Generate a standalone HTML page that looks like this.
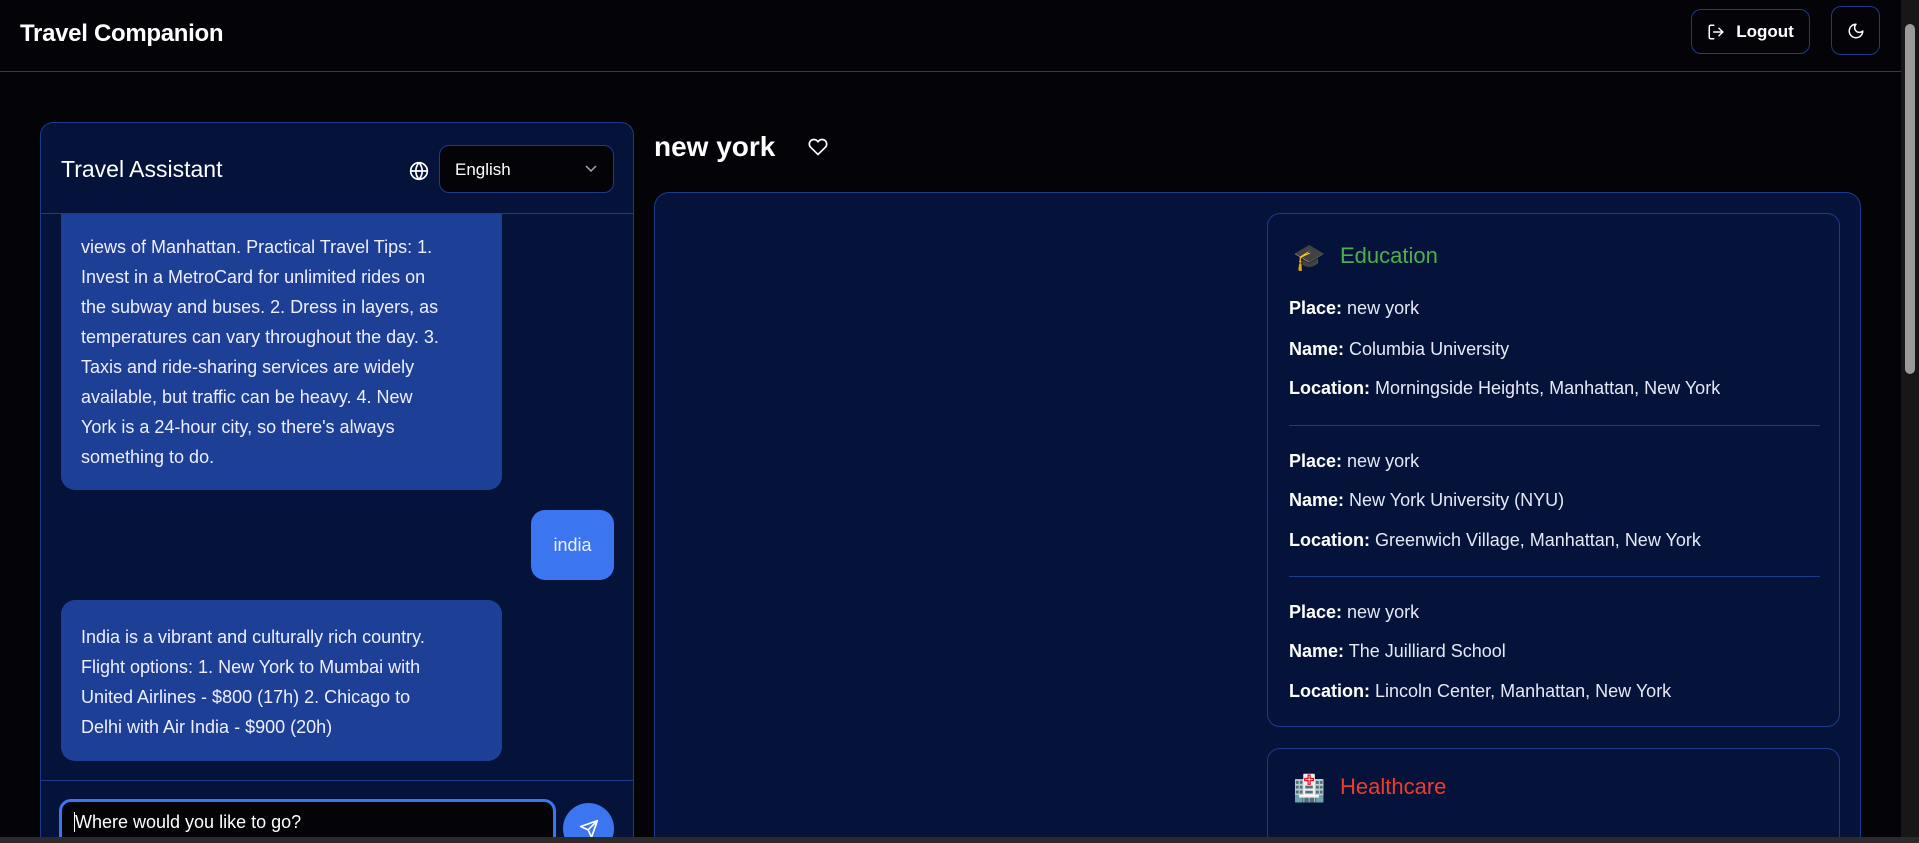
<!DOCTYPE html>
<html><head><meta charset="utf-8"><style>
*{box-sizing:border-box;margin:0;padding:0}
html,body{width:1919px;height:843px;overflow:hidden;background:#030308;font-family:"Liberation Sans",sans-serif;color:#fff}
#root{position:relative;width:1919px;height:843px;overflow:hidden}
.hdr{position:absolute;left:0;top:0;width:1901px;height:72px;border-bottom:1px solid #1e3a8a}
.hdr h1{position:absolute;left:20px;top:20px;font-size:24px;font-weight:bold;letter-spacing:-0.3px}
.btn{position:absolute;border:1px solid #1e3a8a;border-radius:10px;display:flex;align-items:center;justify-content:center}
.sb{position:absolute;left:1901px;top:0;width:18px;height:843px;background:#171717}
.sb div{position:absolute;left:4px;top:24px;width:10px;height:350px;background:#9a9a9a;border-radius:5px}
.bot{position:absolute;left:0;top:837px;width:1919px;height:6px;background:#2b2b2b}
.lp{position:absolute;left:40px;top:122px;width:594px;height:721px;background:#05133a;border:1px solid #1e3a8a;border-bottom:none;border-radius:13px 13px 0 0;overflow:hidden}
.lp h2{position:absolute;left:20px;top:33px;font-size:23px;font-weight:normal}
.sel{position:absolute;left:398px;top:22px;width:175px;height:48px;background:#030308;border:1px solid #1e3a8a;border-radius:10px;font-size:17px;padding:14px 15px}
.dv{position:absolute;left:0;width:100%;height:1px;background:#1e3a8a}
.bub{position:absolute;background:#1e3f96;border-radius:14px;font-size:18px;line-height:30px;padding:0 20px;color:#eef;white-space:nowrap}
.inp{position:absolute;left:18px;top:676px;width:497px;height:70px;border:3px solid #3b76f0;border-radius:12px;background:#030308;font-size:18px;padding:10px 12px}
.send{position:absolute;left:522px;top:680px;width:51px;height:51px;border-radius:50%;background:#3b76f0;display:flex;align-items:center;justify-content:center}
.rp{position:absolute;left:654px;top:192px;width:1207px;height:651px;background:#05133a;border:1px solid #1e3a8a;border-bottom:none;border-radius:15px 15px 0 0;overflow:hidden}
.card{position:absolute;left:612px;width:573px;border:1px solid #1e3a8a;border-radius:13px}
.card p{position:absolute;left:21px;font-size:18px;white-space:nowrap;color:#e6e9f5}
.card b{color:#fff}
.card .t{position:absolute;left:72px;font-size:22px}
.card .hr{position:absolute;left:21px;width:531px;height:1px;background:#1e3a8a}
</style></head><body><div id="root">
<div class="hdr"><h1>Travel Companion</h1>
<div class="btn" style="left:1691px;top:9px;width:119px;height:45px;font-size:17px;font-weight:bold"><svg width="18" height="18" viewBox="0 0 24 24" fill="none" stroke="#fff" stroke-width="2" stroke-linecap="round" stroke-linejoin="round" style="margin-right:11px"><path d="M9 21H5a2 2 0 0 1-2-2V5a2 2 0 0 1 2-2h4"/><path d="M16 17l5-5-5-5"/><path d="M21 12H9"/></svg>Logout</div>
<div class="btn" style="left:1831px;top:6px;width:49px;height:49px"><svg width="18" height="18" viewBox="0 0 24 24" fill="none" stroke="#fff" stroke-width="2" stroke-linecap="round" stroke-linejoin="round"><path d="M12 3a6 6 0 0 0 9 9 9 9 0 1 1-9-9Z"/></svg></div>
</div>
<div class="sb"><div></div></div>
<div class="lp">
<h2>Travel Assistant</h2>
<svg style="position:absolute;left:368px;top:38px" width="20" height="20" viewBox="0 0 24 24" fill="none" stroke="#fff" stroke-width="2"><circle cx="12" cy="12" r="10"/><path d="M2 12h20M12 2a15 15 0 0 1 0 20M12 2a15 15 0 0 0 0 20"/></svg>
<div class="sel">English<svg style="position:absolute;right:16px;top:19px" width="12" height="8" viewBox="0 0 12 8" fill="none" stroke="#aaa" stroke-width="1.5"><path d="M1 1l5 5 5-5"/></svg></div>
<div class="bub" style="left:20px;top:90px;width:441px;height:277px;border-radius:0 0 14px 14px;padding-top:19px">views of Manhattan. Practical Travel Tips: 1.<br>Invest in a MetroCard for unlimited rides on<br>the subway and buses. 2. Dress in layers, as<br>temperatures can vary throughout the day. 3.<br>Taxis and ride-sharing services are widely<br>available, but traffic can be heavy. 4. New<br>York is a 24-hour city, so there's always<br>something to do.</div>
<div class="dv" style="top:90px"></div>
<div class="bub" style="left:490px;top:387px;width:83px;height:70px;background:#3b76f0;padding:20px 0;text-align:center">india</div>
<div class="bub" style="left:20px;top:477px;width:441px;height:161px;padding-top:22px">India is a vibrant and culturally rich country.<br>Flight options: 1. New York to Mumbai with<br>United Airlines - $800 (17h) 2. Chicago to<br>Delhi with Air India - $900 (20h)</div>
<div class="dv" style="top:657px"></div>
<div class="inp"><span style="border-left:1px solid #fff">Where would you like to go?</span></div>
<div class="send"><svg width="20" height="20" viewBox="0 0 24 24" fill="none" stroke="#fff" stroke-width="2" stroke-linejoin="round"><path d="M22 2L11 13M22 2l-7 20-4-9-9-4 20-7Z"/></svg></div>
</div>
<div style="position:absolute;left:654px;top:131px;font-size:28px;font-weight:bold">new york</div>
<svg style="position:absolute;left:808px;top:137px" width="20" height="20" viewBox="0 0 24 24" fill="none" stroke="#fff" stroke-width="2"><path d="M20.8 4.6a5.5 5.5 0 0 0-7.8 0L12 5.7l-1-1.1a5.5 5.5 0 0 0-7.8 7.8L12 21l8.8-8.6a5.5 5.5 0 0 0 0-7.8Z"/></svg>
<div class="rp">
<div class="card" style="top:20px;height:514px">
<div style="position:absolute;left:25px;top:28px;font-size:26px">🎓</div>
<div class="t" style="top:29px;color:#4caf50">Education</div>
<p style="top:84px"><b>Place:</b> new york</p>
<p style="top:125px"><b>Name:</b> Columbia University</p>
<p style="top:164px"><b>Location:</b> Morningside Heights, Manhattan, New York</p>
<div class="hr" style="top:211px"></div>
<p style="top:237px"><b>Place:</b> new york</p>
<p style="top:276px"><b>Name:</b> New York University (NYU)</p>
<p style="top:316px"><b>Location:</b> Greenwich Village, Manhattan, New York</p>
<div class="hr" style="top:362px"></div>
<p style="top:388px"><b>Place:</b> new york</p>
<p style="top:427px"><b>Name:</b> The Juilliard School</p>
<p style="top:467px"><b>Location:</b> Lincoln Center, Manhattan, New York</p>
</div>
<div class="card" style="top:555px;height:200px">
<div style="position:absolute;left:25px;top:24px;font-size:26px">🏥</div>
<div class="t" style="top:25px;color:#f03a2e">Healthcare</div>
</div>
</div>
<div class="bot"></div>
</div></body></html>
